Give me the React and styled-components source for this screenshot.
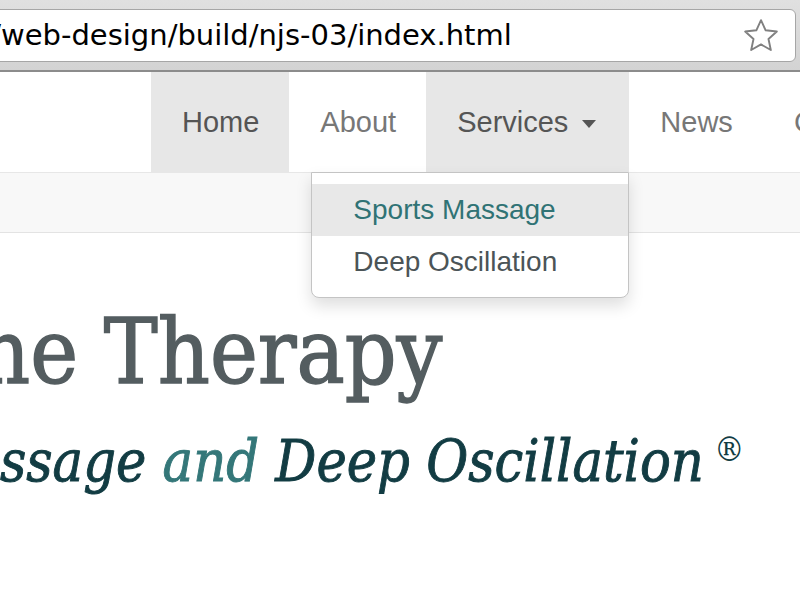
import styled, { createGlobalStyle } from 'styled-components'

const GlobalStyle = createGlobalStyle`
    html, body {
        margin: 0;
        padding: 0;
        background: #ffffff;
        overflow: hidden;
    }
    body {
        font-family: "Liberation Sans", Arial, sans-serif;
    }
`

const Page = styled.div`
    width: 800px;
    height: 600px;
    overflow: hidden;
    display: flex;
    flex-direction: column;
`

// browser chrome with the address field
const Chrome = styled.div`
    height: 72px;
    flex-shrink: 0;
    background: linear-gradient(#e0e0e0, #d3d3d3);
    border-bottom: 2px solid #8c8c8c;
    padding-top: 9px;
    box-sizing: border-box;
    display: flex;
`

const UrlField = styled.div`
    height: 53px;
    margin-left: -20px;
    width: 816px;
    box-sizing: border-box;
    background: #fff;
    border: 1px solid #a6a6a6;
    border-radius: 6px;
    display: flex;
    align-items: center;
    justify-content: space-between;
    padding: 0 15px 0 20px;
`

const UrlText = styled.span`
    font-family: "DejaVu Sans", Verdana, sans-serif;
    font-size: 29px;
    color: #000;
    white-space: nowrap;
    padding-bottom: 2px;
`

// keeps text that has scrolled off the left edge in the flow
const Offscreen = styled.span`
    display: inline-flex;
    width: 0;
    justify-content: flex-end;
    white-space: nowrap;
`

const Header = styled.header`
    height: 100px;
    flex-shrink: 0;
    background: #fff;
    display: flex;
    padding-left: 151px;
    position: relative;
    z-index: 2;
`

const NavItem = styled.div`
    position: relative;
    display: flex;
    align-items: center;
    padding: 0 ${p => (p.$wide ? 33 : 30)}px 0 31px;
    height: 100px;
    font-size: 29px;
    white-space: nowrap;
    color: ${p => (p.$active ? '#555555' : '#777777')};
    background: ${p => (p.$active ? '#e7e7e7' : 'transparent')};
`

const Caret = styled.span`
    display: inline-block;
    width: 0;
    height: 0;
    margin-left: 14px;
    margin-top: 3px;
    border-top: 8px solid #555;
    border-left: 7.5px solid transparent;
    border-right: 7.5px solid transparent;
`

const Dropdown = styled.ul`
    position: absolute;
    top: 100%;
    right: 0;
    width: 318px;
    box-sizing: border-box;
    margin: 0;
    padding: 11px 0 9px;
    list-style: none;
    background: #fff;
    border: 1px solid #c4c4c4;
    border-radius: 0 0 8px 8px;
    box-shadow: 0 8px 16px rgba(0, 0, 0, 0.13);
`

const DropItem = styled.li`
    height: 52px;
    display: flex;
    align-items: center;
    padding: 0 41px;
    font-size: 28px;
    color: ${p => (p.$hover ? '#307375' : '#4b5457')};
    background: ${p => (p.$hover ? '#e8e8e8' : 'transparent')};
`

const SubBar = styled.div`
    height: 61px;
    flex-shrink: 0;
    box-sizing: border-box;
    background: #f8f8f8;
    border-top: 1px solid #e7e7e7;
    border-bottom: 1px solid #e3e3e3;
`

const Hero = styled.section`
    display: flex;
    flex-direction: column;
    padding-top: 74px;
    font-family: "DejaVu Serif", "Liberation Serif", serif;
    font-stretch: semi-condensed;
`

const Title = styled.h1`
    margin: 0 0 0 -22px;
    font-size: 90px;
    line-height: 1;
    font-weight: normal;
    color: #545d60;
    -webkit-text-stroke: 1.4px #545d60;
    white-space: nowrap;
`

const Subtitle = styled.h2`
    margin: 35px 0 0;
    font-size: 57px;
    line-height: 1;
    font-weight: normal;
    font-style: italic;
    color: #123c43;
    -webkit-text-stroke: 0.9px #123c43;
    white-space: nowrap;
`

const Accent = styled.span`
    color: #347779;
    -webkit-text-stroke: 0.9px #347779;
`

const Reg = styled.sup`
    font-style: normal;
    font-size: 34px;
    vertical-align: 20px;
    margin-left: 10px;
    -webkit-text-stroke: 0;
`

function StarIcon() {
    return (
        <svg width="38" height="38" viewBox="0 0 36 36">
            <path
                d="M18 3 L22.4 12.6 L33 13.8 L25.1 20.9 L27.3 31.3 L18 26 L8.7 31.3 L10.9 20.9 L3 13.8 L13.6 12.6 Z"
                fill="#fff"
                stroke="#808080"
                strokeWidth="1.8"
                strokeLinejoin="round"
            />
        </svg>
    )
}

export default function App() {
    return (
        <Page>
            <GlobalStyle />
            <Chrome>
                <UrlField>
                    <UrlText>
                        <Offscreen>file:///Users/njs/Sites/</Offscreen>web-design/build/njs-03/index.html
                    </UrlText>
                    <StarIcon />
                </UrlField>
            </Chrome>
            <Header>
                <NavItem $active>Home</NavItem>
                <NavItem>About</NavItem>
                <NavItem $active $wide>
                    Services<Caret />
                    <Dropdown>
                        <DropItem $hover>Sports Massage</DropItem>
                        <DropItem>Deep Oscillation</DropItem>
                    </Dropdown>
                </NavItem>
                <NavItem>News</NavItem>
                <NavItem>Contact</NavItem>
            </Header>
            <SubBar />
            <Hero>
                <Title>
                    <Offscreen>An</Offscreen>ne Therapy
                </Title>
                <Subtitle>
                    <Offscreen>Sports Ma</Offscreen>ssage <Accent>and</Accent> Deep Oscillation<Reg>®</Reg>
                </Subtitle>
            </Hero>
        </Page>
    )
}
